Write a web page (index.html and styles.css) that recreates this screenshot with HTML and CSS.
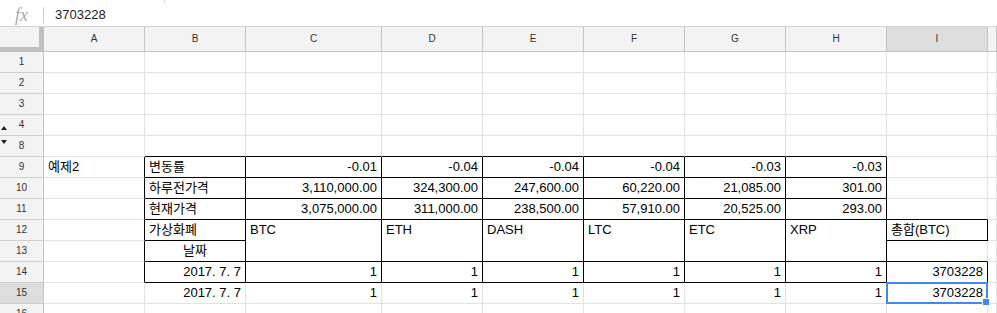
FILE: index.html
```html
<!DOCTYPE html>
<html>
<head>
    <meta charset="UTF-8">
    <title>예제2 - Sheet</title>
    <link rel="stylesheet" href="styles.css">
</head>
<body>
    <!-- Edge of the toolbar above the formula bar -->
    <div class="toolbar-edge"><span></span></div>

    <!-- Formula bar -->
    <div class="formula-bar">
        <span class="fx">fx</span>
        <span class="formula">3703228</span>
    </div>

    <!-- Grid: row header, columns A..I, then a sliver of J -->
    <div class="sheet">
        <div class="corner"></div>
        <div class="col-head">A</div>
        <div class="col-head">B</div>
        <div class="col-head">C</div>
        <div class="col-head">D</div>
        <div class="col-head">E</div>
        <div class="col-head">F</div>
        <div class="col-head">G</div>
        <div class="col-head">H</div>
        <div class="col-head active">I</div>
        <div class="col-head"></div>

        <!-- row 1 -->
        <div class="row-head">1</div>
        <div class="cell"></div><div class="cell"></div><div class="cell"></div><div class="cell"></div><div class="cell"></div>
        <div class="cell"></div><div class="cell"></div><div class="cell"></div><div class="cell"></div><div class="cell"></div>

        <!-- row 2 -->
        <div class="row-head">2</div>
        <div class="cell"></div><div class="cell"></div><div class="cell"></div><div class="cell"></div><div class="cell"></div>
        <div class="cell"></div><div class="cell"></div><div class="cell"></div><div class="cell"></div><div class="cell"></div>

        <!-- row 3 -->
        <div class="row-head">3</div>
        <div class="cell"></div><div class="cell"></div><div class="cell"></div><div class="cell"></div><div class="cell"></div>
        <div class="cell"></div><div class="cell"></div><div class="cell"></div><div class="cell"></div><div class="cell"></div>

        <!-- row 4 (rows 5-7 hidden) -->
        <div class="row-head">4<span class="arrow up"></span></div>
        <div class="cell"></div><div class="cell"></div><div class="cell"></div><div class="cell"></div><div class="cell"></div>
        <div class="cell"></div><div class="cell"></div><div class="cell"></div><div class="cell"></div><div class="cell"></div>

        <!-- row 8 -->
        <div class="row-head">8<span class="arrow down"></span></div>
        <div class="cell"></div>
        <div class="cell bb"></div>
        <div class="cell bb"></div>
        <div class="cell bb"></div>
        <div class="cell bb"></div>
        <div class="cell bb"></div>
        <div class="cell bb"></div>
        <div class="cell bb"></div>
        <div class="cell"></div>
        <div class="cell"></div>

        <!-- row 9 -->
        <div class="row-head">9</div>
        <div class="cell br">예제2</div>
        <div class="cell br bb">변동률</div>
        <div class="cell num br bb">-0.01</div>
        <div class="cell num br bb">-0.04</div>
        <div class="cell num br bb">-0.04</div>
        <div class="cell num br bb">-0.04</div>
        <div class="cell num br bb">-0.03</div>
        <div class="cell num br bb">-0.03</div>
        <div class="cell"></div>
        <div class="cell"></div>

        <!-- row 10 -->
        <div class="row-head">10</div>
        <div class="cell br"></div>
        <div class="cell br bb">하루전가격</div>
        <div class="cell num br bb">3,110,000.00</div>
        <div class="cell num br bb">324,300.00</div>
        <div class="cell num br bb">247,600.00</div>
        <div class="cell num br bb">60,220.00</div>
        <div class="cell num br bb">21,085.00</div>
        <div class="cell num br bb">301.00</div>
        <div class="cell"></div>
        <div class="cell"></div>

        <!-- row 11 -->
        <div class="row-head">11</div>
        <div class="cell br"></div>
        <div class="cell br bb">현재가격</div>
        <div class="cell num br bb">3,075,000.00</div>
        <div class="cell num br bb">311,000.00</div>
        <div class="cell num br bb">238,500.00</div>
        <div class="cell num br bb">57,910.00</div>
        <div class="cell num br bb">20,525.00</div>
        <div class="cell num br bb">293.00</div>
        <div class="cell bb"></div>
        <div class="cell"></div>

        <!-- row 12 (C..H merged with row 13) -->
        <div class="row-head">12</div>
        <div class="cell br"></div>
        <div class="cell br bb">가상화폐</div>
        <div class="cell merge br bb">BTC</div>
        <div class="cell merge br bb">ETH</div>
        <div class="cell merge br bb">DASH</div>
        <div class="cell merge br bb">LTC</div>
        <div class="cell merge br bb">ETC</div>
        <div class="cell merge br bb">XRP</div>
        <div class="cell br bb">총합(BTC)</div>
        <div class="cell"></div>

        <!-- row 13 -->
        <div class="row-head">13</div>
        <div class="cell br"></div>
        <div class="cell center br bb">날짜</div>
        <div class="cell bb"></div>
        <div class="cell"></div>

        <!-- row 14 -->
        <div class="row-head">14</div>
        <div class="cell br"></div>
        <div class="cell num br bb">2017. 7. 7</div>
        <div class="cell num br bb">1</div>
        <div class="cell num br bb">1</div>
        <div class="cell num br bb">1</div>
        <div class="cell num br bb">1</div>
        <div class="cell num br bb">1</div>
        <div class="cell num br bb">1</div>
        <div class="cell num br bb">3703228</div>
        <div class="cell"></div>

        <!-- row 15 -->
        <div class="row-head active">15</div>
        <div class="cell"></div>
        <div class="cell num">2017. 7. 7</div>
        <div class="cell num">1</div>
        <div class="cell num">1</div>
        <div class="cell num">1</div>
        <div class="cell num">1</div>
        <div class="cell num">1</div>
        <div class="cell num">1</div>
        <div class="cell num selected">3703228<span class="sel-box"></span><span class="sel-handle"></span></div>
        <div class="cell"></div>

        <!-- row 16 -->
        <div class="row-head">16</div>
        <div class="cell"></div><div class="cell"></div><div class="cell"></div><div class="cell"></div><div class="cell"></div>
        <div class="cell"></div><div class="cell"></div><div class="cell"></div><div class="cell"></div><div class="cell"></div>
    </div>
</body>
</html>
```

FILE: styles.css
```css
body {
    margin: 0;
    width: 997px;
    height: 313px;
    overflow: hidden;
    background: #fff;
    font-family: "Liberation Sans", Arial, "Noto Sans CJK KR", sans-serif;
    color: #000;
}

/* Toolbar edge */
.toolbar-edge {
    height: 3px;
}

    .toolbar-edge span {
        display: block;
        width: 164px;
        height: 3px;
        border-right: 1px solid #d9d9d9;
    }

/* Formula bar */
.formula-bar {
    display: flex;
    align-items: center;
    height: 24px;
    box-sizing: border-box;
    border-bottom: 1px solid #d4d4d4;
}

.fx {
    width: 43px;
    text-align: center;
    font-family: "Liberation Serif", serif;
    font-style: italic;
    font-size: 18px;
    line-height: 16px;
    color: #a8a8a8;
}

.formula {
    border-left: 1px solid #d0d0d0;
    padding-left: 11px;
    height: 16px;
    line-height: 16px;
    font-size: 13px;
    color: #222;
}

/* Sheet grid */
.sheet {
    display: grid;
    grid-template-columns: 44px 101px 101px 136px repeat(6, 101px) 1fr;
    grid-template-rows: 25px;
    grid-auto-rows: 21px;
}

.corner {
    box-sizing: border-box;
    background: #f3f3f3;
    border-right: 5px solid #c0c0c0;
    border-bottom: 5px solid #c0c0c0;
}

.col-head {
    box-sizing: border-box;
    background: #f3f3f3;
    border-right: 1px solid #c4c4c4;
    border-bottom: 1px solid #c4c4c4;
    text-align: center;
    font-size: 10px;
    line-height: 24px;
    color: #333;
}

    .col-head.active {
        background: #dddddd;
    }

.row-head {
    position: relative;
    box-sizing: border-box;
    background: #f3f3f3;
    border-right: 1px solid #c4c4c4;
    border-bottom: 1px solid #cfcfcf;
    text-align: center;
    font-size: 10px;
    line-height: 20px;
    color: #333;
}

    .row-head.active {
        background: #dddddd;
    }

/* Hidden rows 5-7 markers */
.arrow {
    position: absolute;
    left: 1px;
    width: 0;
    height: 0;
    border-left: 3px solid transparent;
    border-right: 3px solid transparent;
}

    .arrow.up {
        top: 11px;
        border-bottom: 4px solid #222;
    }

    .arrow.down {
        top: 4px;
        border-top: 4px solid #222;
    }

.cell {
    box-sizing: border-box;
    border-right: 1px solid #e2e2e2;
    border-bottom: 1px solid #e2e2e2;
    padding: 0 4px;
    font-size: 13px;
    line-height: 20px;
    white-space: nowrap;
    overflow: hidden;
}

    .cell.num {
        text-align: right;
    }

    .cell.center {
        text-align: center;
    }

    .cell.merge {
        grid-row: span 2;
    }

    /* Black cell borders */
    .cell.br {
        border-right-color: #000;
    }

    .cell.bb {
        border-bottom-color: #000;
    }

    /* Active cell */
    .cell.selected {
        position: relative;
        overflow: visible;
    }

.sel-box {
    position: absolute;
    top: -1px;
    left: -1px;
    width: 102px;
    height: 22px;
    box-sizing: border-box;
    border: 2px solid #4285f4;
}

.sel-handle {
    position: absolute;
    top: 16px;
    left: 96px;
    width: 6px;
    height: 6px;
    background: #4285f4;
    box-shadow: 0 0 0 1px #fff;
}
```
